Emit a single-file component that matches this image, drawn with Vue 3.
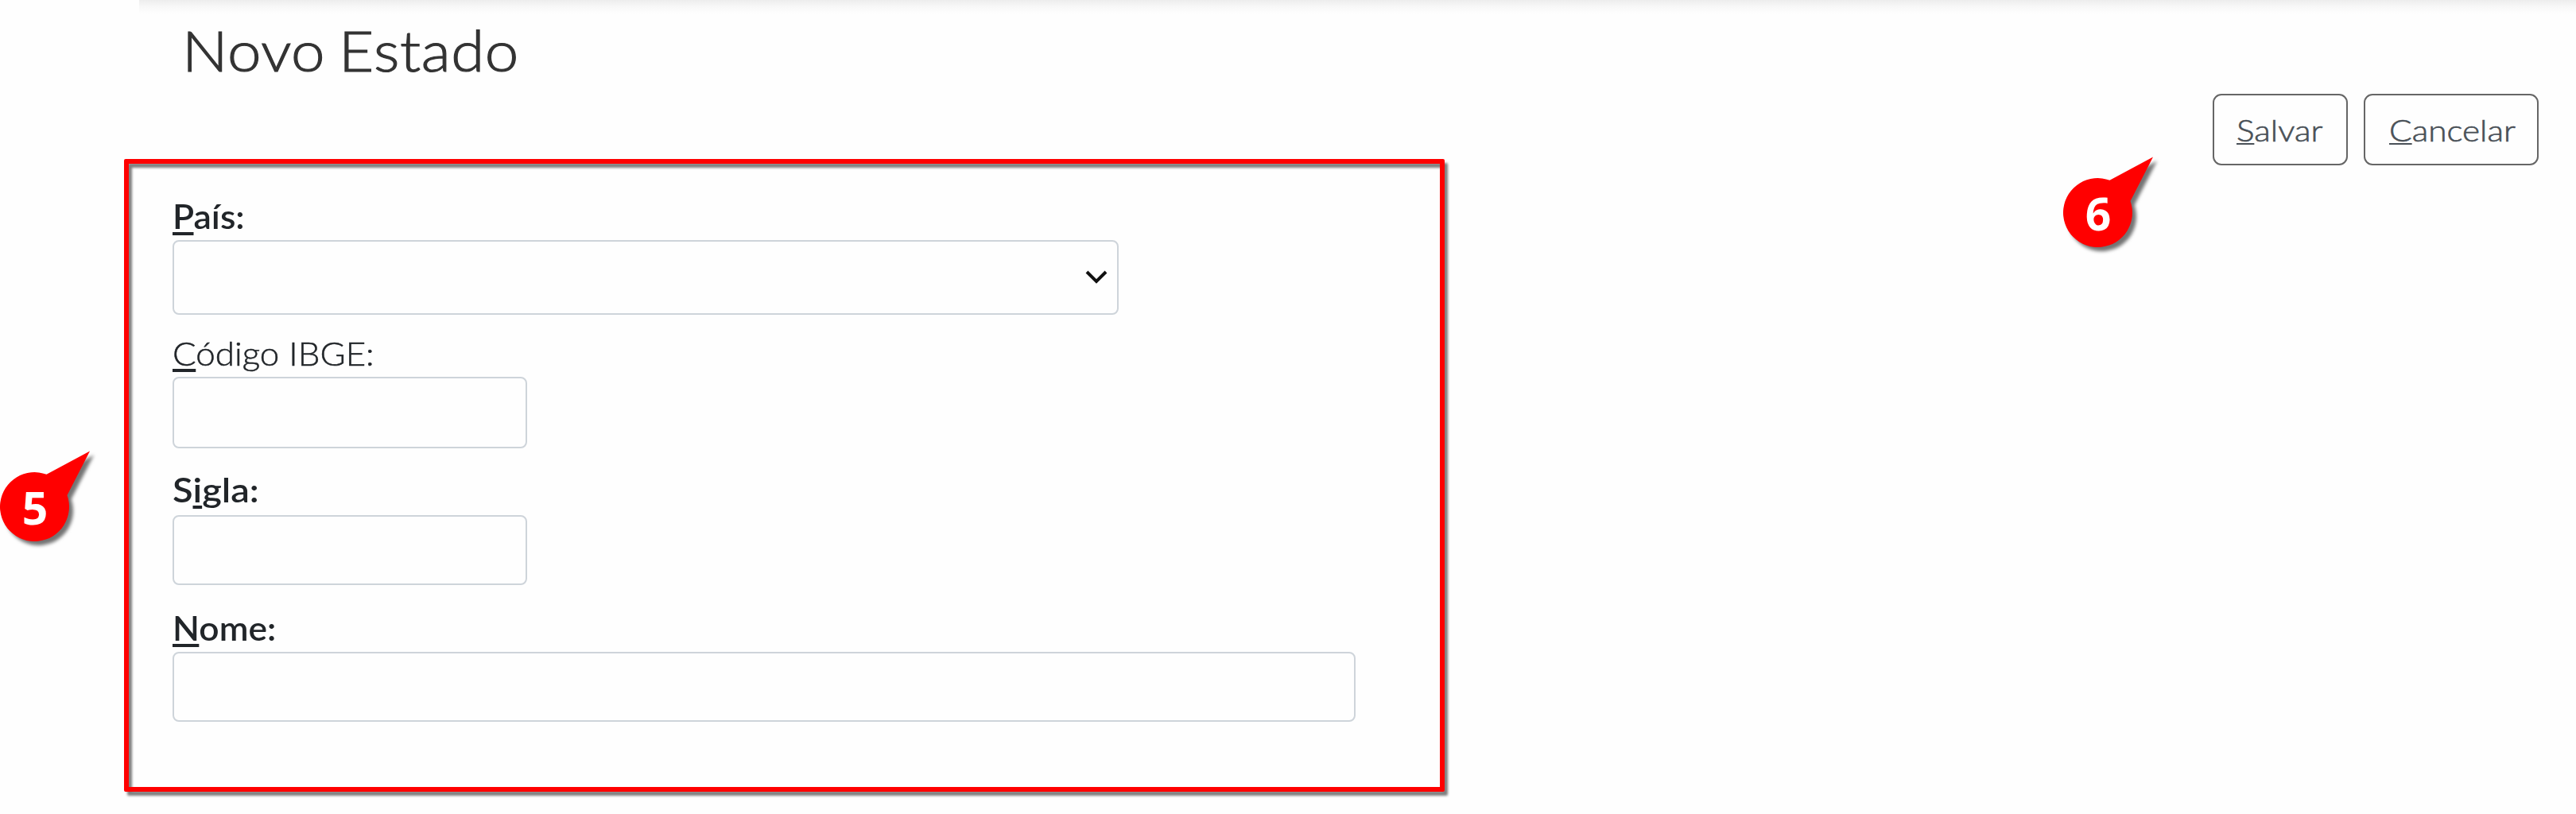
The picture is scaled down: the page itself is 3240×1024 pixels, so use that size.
<script setup>
const fields = [
  { id: 'pais', pre: '', key: 'P', post: 'aís:', required: true, type: 'select' },
  { id: 'ibge', pre: '', key: 'C', post: 'ódigo IBGE:', required: false, type: 'text' },
  { id: 'sigla', pre: 'S', key: 'i', post: 'gla:', required: true, type: 'text' },
  { id: 'nome', pre: '', key: 'N', post: 'ome:', required: true, type: 'text' },
]
const actions = [
  { id: 'salvar', key: 'S', rest: 'alvar' },
  { id: 'cancelar', key: 'C', rest: 'ancelar' },
]
const markers = [
  { id: 'five', n: 5 },
  { id: 'six', n: 6 },
]
</script>

<template>
  <div class="page">
    <div class="topbar-shadow"></div>
    <header class="header">
      <h1>Novo Estado</h1>
      <div class="actions">
        <button v-for="a in actions" :key="a.id" :class="['btn', a.id]" type="button">
          <span class="wide"><u>{{ a.key }}</u>{{ a.rest }}</span>
        </button>
      </div>
    </header>

    <form class="form">
      <div v-for="f in fields" :key="f.id" :class="['field', f.id]">
        <label :for="f.id" :class="{ required: f.required }"><span class="wide">{{ f.pre }}<u>{{ f.key }}</u>{{ f.post }}</span></label>
        <div v-if="f.type === 'select'" :id="f.id" class="control select" role="combobox" tabindex="0">
          <svg class="chevron" width="28" height="18" viewBox="0 0 28 18">
            <path d="M2 2 L14 14 L26 2" fill="none" stroke="#111" stroke-width="4" />
          </svg>
        </div>
        <input v-else :id="f.id" class="control" type="text" />
      </div>
    </form>

    <div class="frame"></div>
    <div v-for="m in markers" :key="m.id" :class="['marker', m.id]">
      <svg width="130" height="130" viewBox="0 0 130 130">
        <path d="M113 -1.5 L84.5 54 A43.5 43.5 0 1 1 58.5 27.7 Z" fill="#f00" />
      </svg>
      <span class="digit">{{ m.n }}</span>
    </div>
  </div>
</template>

<style>
body {
  margin: 0;
  background: #fefefe;
}
</style>

<style scoped>
.page {
  position: relative;
  width: 3240px;
  height: 1024px;
  overflow: hidden;
  background: #fefefe;
  font-family: Lato, "Open Sans", sans-serif;
  color: #212529;
}
.topbar-shadow {
  position: absolute;
  left: 175px;
  right: 0;
  top: 0;
  height: 17px;
  background: linear-gradient(#ededed, #f7f7f7 45%, #fefefe);
}
.header {
  display: flex;
  justify-content: space-between;
  height: 242px;
  padding: 0 47px 0 229px;
  box-sizing: border-box;
}
h1 {
  margin: 21px 0 0;
  font-size: 70px;
  line-height: 84px;
  height: 84px;
  font-weight: 300;
  color: #333;
  white-space: nowrap;
  letter-spacing: 0.5px;
  word-spacing: -4px;
  transform: scaleX(1.09);
  transform-origin: 0 0;
  -webkit-text-stroke: 1.1px #333;
}
.wide {
  display: inline-block;
  transform-origin: 0 0;
}
.actions {
  display: flex;
  gap: 20px;
  margin-top: 118px;
}
.btn {
  width: 170px;
  height: 90px;
  box-sizing: border-box;
  padding: 0 0 0 28px;
  border: 2px solid #666;
  border-radius: 11px;
  background: transparent;
  color: #495057;
  font-family: inherit;
  font-size: 37px;
  font-weight: 300;
  line-height: 86px;
  text-align: left;
  white-space: nowrap;
  -webkit-text-stroke: 0.6px #495057;
}
.btn .wide { transform: scaleX(1.145) translateY(1px); }
.btn.cancelar {
  width: 220px;
  padding-left: 30px;
}
u {
  text-decoration-line: underline;
  text-decoration-thickness: 4px;
  text-underline-offset: 4px;
  text-decoration-skip-ink: none;
}
.btn u {
  text-decoration-thickness: 2px;
  text-underline-offset: 2px;
}
.form {
  display: flex;
  flex-direction: column;
  align-items: flex-start;
  padding-left: 217px;
}
.field {
  display: flex;
  flex-direction: column;
}
label {
  height: 60px;
  font-size: 42px;
  line-height: 60px;
  font-weight: 300;
  white-space: nowrap;
  -webkit-text-stroke: 0.5px #212529;
}
label.required {
  font-weight: 600;
  -webkit-text-stroke: 0;
}
.pais .wide { transform: scaleX(1.06); }
.ibge .wide { transform: scaleX(1.045); }
.sigla .wide { transform: scaleX(1.12); }
.nome .wide { transform: scaleX(1.055); }
.control {
  display: block;
  width: 446px;
  height: 90px;
  box-sizing: border-box;
  border: 2px solid #ced4da;
  border-radius: 8px;
  background: #fefefe;
  outline: none;
}
.pais { margin-bottom: 18px; }
.ibge { margin-bottom: 22px; }
.sigla { margin-bottom: 24px; }
.sigla label { margin-bottom: 2px; }
.sigla .control { height: 88px; }
.nome .control { width: 1488px; height: 88px; }
.select {
  display: flex;
  align-items: center;
  justify-content: flex-end;
  width: 1190px;
  height: 94px;
  padding-right: 12px;
}
.frame {
  position: absolute;
  left: 156px;
  top: 200px;
  width: 1661px;
  height: 796px;
  box-sizing: border-box;
  border: 6px solid #f00;
  border-radius: 2px;
  filter: drop-shadow(4px 5px 1.5px rgba(0, 0, 0, 0.5));
  pointer-events: none;
}
.marker {
  position: absolute;
  width: 130px;
  height: 130px;
}
.marker svg {
  display: block;
  overflow: visible;
  filter: drop-shadow(5px 5px 2px rgba(0, 0, 0, 0.55));
}
.five { left: 0; top: 569px; }
.six { left: 2595px; top: 199px; }
.digit {
  position: absolute;
  left: 0;
  top: 27px;
  width: 88px;
  text-align: center;
  font-family: "Open Sans", sans-serif;
  font-size: 57px;
  line-height: 84px;
  font-weight: 700;
  color: #fff;
}
</style>
